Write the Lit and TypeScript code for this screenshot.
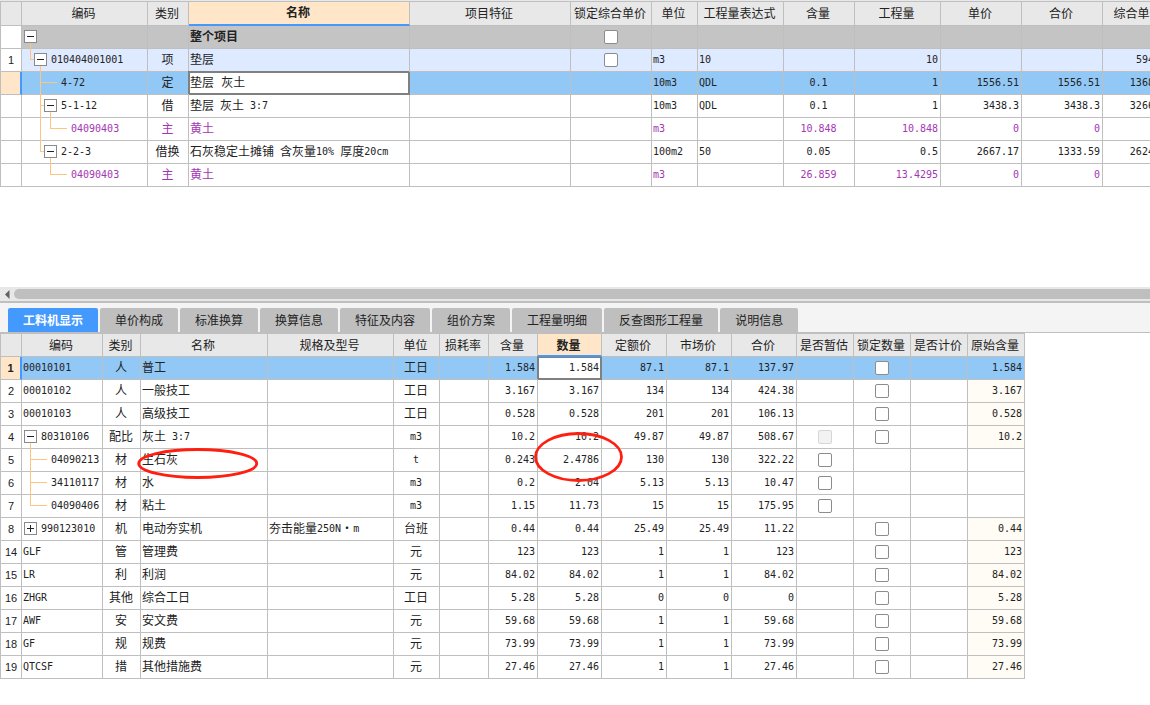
import { LitElement, html, svg, css, nothing } from "lit";
import { customElement, property } from "lit/decorators.js";
import { classMap } from "lit/directives/class-map.js";

type Align = "left" | "center" | "right";
type Check = "on" | "off" | "disabled";

interface Column {
  key: string;
  label: string;
  width: number;
  align: Align;
  current?: boolean;
  tint?: boolean;
}

interface Tree {
  level: number;
  box?: "-" | "+";
  last?: boolean;
  through?: number[];
}

interface Row {
  no?: string;
  kind?: "project" | "item" | "selected" | "material";
  edit?: string;
  tree?: Tree;
  checks?: Record<string, Check>;
  cells: Record<string, string>;
}

const col = (
  key: string,
  label: string,
  width: number,
  align: Align = "left",
  extra: Partial<Column> = {}
): Column => ({ key, label, width, align, ...extra });

const ITEM_COLUMNS: Column[] = [
  col("code", "编码", 126),
  col("type", "类别", 41, "center"),
  col("name", "名称", 221, "left", { current: true }),
  col("feature", "项目特征", 161),
  col("lock", "锁定综合单价", 81, "center"),
  col("unit", "单位", 46),
  col("expr", "工程量表达式", 86),
  col("content", "含量", 71, "center"),
  col("qty", "工程量", 86, "right"),
  col("price", "单价", 81, "right"),
  col("total", "合价", 81, "right"),
  col("full", "综合单价", 72, "right"),
];

const ITEM_ROWS: Row[] = [
  {
    kind: "project",
    tree: { level: 0, box: "-" },
    checks: { lock: "off" },
    cells: { name: "整个项目" },
  },
  {
    no: "1",
    kind: "item",
    tree: { level: 1, box: "-", last: true },
    checks: { lock: "off" },
    cells: { code: "010404001001", type: "项", name: "垫层", unit: "m3", expr: "10", qty: "10", full: "594.46" },
  },
  {
    kind: "selected",
    edit: "name",
    tree: { level: 2 },
    cells: { code: "4-72", type: "定", name: "垫层 灰土", unit: "10m3", expr: "QDL", content: "0.1", qty: "1", price: "1556.51", total: "1556.51", full: "1368.08" },
  },
  {
    tree: { level: 2, box: "-" },
    cells: { code: "5-1-12", type: "借", name: "垫层 灰土 3:7", unit: "10m3", expr: "QDL", content: "0.1", qty: "1", price: "3438.3", total: "3438.3", full: "3266.08" },
  },
  {
    kind: "material",
    tree: { level: 3, last: true, through: [1] },
    cells: { code: "04090403", type: "主", name: "黄土", unit: "m3", content: "10.848", qty: "10.848", price: "0", total: "0" },
  },
  {
    tree: { level: 2, box: "-", last: true },
    cells: { code: "2-2-3", type: "借换", name: "石灰稳定土摊铺 含灰量10% 厚度20cm", unit: "100m2", expr: "50", content: "0.05", qty: "0.5", price: "2667.17", total: "1333.59", full: "2624.08" },
  },
  {
    kind: "material",
    tree: { level: 3, last: true },
    cells: { code: "04090403", type: "主", name: "黄土", unit: "m3", content: "26.859", qty: "13.4295", price: "0", total: "0" },
  },
];

const RES_COLUMNS: Column[] = [
  col("code", "编码", 81),
  col("type", "类别", 38, "center"),
  col("name", "名称", 127),
  col("spec", "规格及型号", 126),
  col("unit", "单位", 46, "center"),
  col("loss", "损耗率", 49, "right"),
  col("content", "含量", 49, "right"),
  col("qty", "数量", 64, "right", { current: true }),
  col("quota", "定额价", 65, "right"),
  col("market", "市场价", 65, "right"),
  col("total", "合价", 65, "right"),
  col("estimate", "是否暂估", 57, "center"),
  col("lock", "锁定数量", 57, "center"),
  col("priced", "是否计价", 57, "center"),
  col("origin", "原始含量", 57, "right", { tint: true }),
];

const res = (
  no: string, code: string, type: string, name: string, unit: string,
  content: string, qty: string, quota: string, market: string, total: string,
  extra: Partial<Row> = {}
): Row => ({
  no,
  checks: { lock: "off" },
  ...extra,
  cells: { code, type, name, unit, content, qty, quota, market, total, origin: content, ...extra.cells },
});

const part = (last = false): Partial<Row> => ({
  tree: { level: 1, last },
  checks: { estimate: "off" },
  cells: { origin: "" },
});

const RES_ROWS: Row[] = [
  res("1", "00010101", "人", "普工", "工日", "1.584", "1.584", "87.1", "87.1", "137.97", { kind: "selected", edit: "qty" }),
  res("2", "00010102", "人", "一般技工", "工日", "3.167", "3.167", "134", "134", "424.38"),
  res("3", "00010103", "人", "高级技工", "工日", "0.528", "0.528", "201", "201", "106.13"),
  res("4", "80310106", "配比", "灰土 3:7", "m3", "10.2", "10.2", "49.87", "49.87", "508.67", {
    tree: { level: 0, box: "-" },
    checks: { estimate: "disabled", lock: "off" },
  }),
  res("5", "04090213", "材", "生石灰", "t", "0.243", "2.4786", "130", "130", "322.22", part()),
  res("6", "34110117", "材", "水", "m3", "0.2", "2.04", "5.13", "5.13", "10.47", part()),
  res("7", "04090406", "材", "粘土", "m3", "1.15", "11.73", "15", "15", "175.95", part(true)),
  res("8", "990123010", "机", "电动夯实机", "台班", "0.44", "0.44", "25.49", "25.49", "11.22", {
    tree: { level: 0, box: "+" },
    cells: { spec: "夯击能量250N·m" },
  }),
  res("14", "GLF", "管", "管理费", "元", "123", "123", "1", "1", "123"),
  res("15", "LR", "利", "利润", "元", "84.02", "84.02", "1", "1", "84.02"),
  res("16", "ZHGR", "其他", "综合工日", "工日", "5.28", "5.28", "0", "0", "0"),
  res("17", "AWF", "安", "安文费", "元", "59.68", "59.68", "1", "1", "59.68"),
  res("18", "GF", "规", "规费", "元", "73.99", "73.99", "1", "1", "73.99"),
  res("19", "QTCSF", "措", "其他措施费", "元", "27.46", "27.46", "1", "1", "27.46"),
];

const TABS = ["工料机显示", "单价构成", "标准换算", "换算信息", "特征及内容", "组价方案", "工程量明细", "反查图形工程量", "说明信息"];

/** Wraps half-width runs so that they take the narrow fixed-pitch face. */
const runs = (text: string) =>
  text
    .split(/([\x20-\x7e]+)/)
    .filter((s) => s !== "")
    .map((s) => (/^[\x20-\x7e]+$/.test(s) ? html`<span class="n">${s}</span>` : s));

@customElement("data-grid")
export class DataGrid extends LitElement {
  @property({ attribute: false }) columns: Column[] = [];
  @property({ attribute: false }) rows: Row[] = [];
  @property({ type: Boolean, reflect: true }) tall = false;

  static styles = css`
    :host {
      display: block;
      color: #222;
      font: 12px/20px "Noto Sans CJK SC", sans-serif;
    }
    .grid {
      table-layout: fixed;
      width: 0;
      border-collapse: separate;
      border-spacing: 0;
      border-top: 1px solid #bfbfbf;
      border-left: 1px solid #bfbfbf;
    }
    .no-col {
      width: 21px;
    }
    th,
    td {
      box-sizing: border-box;
      height: 23px;
      padding: 0 2px 2px 1px;
      border-right: 1px solid #bfbfbf;
      border-bottom: 1px solid #bfbfbf;
      white-space: nowrap;
      vertical-align: middle;
    }
    .head {
      padding: 0 2px 0 0;
      background: #e8e8e8;
      font-weight: 400;
      text-align: center;
    }
    :host([tall]) .head {
      height: 24px;
      padding-bottom: 2px;
    }
    .head.current {
      position: relative;
      z-index: 1;
      background: #ffe6c8;
      border-bottom: 2px solid #4499ff;
      font-weight: 700;
    }
    .no {
      padding: 0;
      background: #fff;
      font: 400 11px/20px "Liberation Sans", sans-serif;
      text-align: center;
    }
    .n {
      font-family: "DejaVu Sans Mono", monospace;
      font-size: 10px;
      line-height: 1;
      vertical-align: 1px;
    }
    .left {
      text-align: left;
    }
    .center {
      text-align: center;
    }
    .right {
      text-align: right;
    }
    .tint {
      background: #fffbf5;
    }
    .project {
      background: #c4c4c4;
      font-weight: 700;
    }
    .item {
      background: #deeaff;
    }
    .selected {
      background: #92c8f6;
    }
    .selected .tint {
      background: none;
    }
    .selected .no {
      background: #ffe6c8;
      border-right: 2px solid #4499ff;
      font-weight: 700;
    }
    .material {
      color: #a436b4;
    }
    .editing {
      padding: 0;
      background: #fff;
      border: solid #808080;
      border-width: 1px 2px 2px 1px;
      box-shadow: -1px -1px 0 #808080;
    }
    .field {
      display: block;
      box-sizing: border-box;
      width: 100%;
      height: 20px;
      padding: 0 1px 0 0;
      border: 0;
      outline: 0;
      background: none;
      color: inherit;
      font: 12px/20px "DejaVu Sans Mono", "Noto Sans CJK SC", monospace;
    }
    .field.right {
      font-size: 10px;
    }
    .tree,
    .ticked {
      padding: 0;
    }
    .branch {
      display: flex;
      align-items: center;
      height: 22px;
    }
    .label {
      padding-bottom: 2px;
    }
    .guides {
      flex: none;
      display: block;
      overflow: visible;
    }
    .toggle {
      flex: none;
      position: relative;
      display: block;
      box-sizing: border-box;
      width: 13px;
      height: 13px;
      margin: 0 4px 1px 0;
      padding: 0;
      border: 1px solid #8a8a8a;
      background: #fff;
      color: #222;
    }
    .sign {
      display: block;
    }
    .check {
      appearance: none;
      display: block;
      box-sizing: border-box;
      width: 14px;
      height: 14px;
      margin: 0 auto;
      border: 1px solid #8c8c8c;
      border-radius: 2px;
      background: #fff;
    }
    .check:disabled {
      border-color: #d6d6d6;
      background: #f2f2f2;
    }
  `;

  private treeCell(tree: Tree, code: string) {
    const { level, box, last, through = [] } = tree;
    const center = (l: number) => 8.5 + 10 * l;
    const width = box ? 2 + 10 * level : 19 + 10 * level;
    const reach = box ? width : width - 4;
    const line = (x1: number, y1: number, x2: number, y2: number) =>
      svg`<line x1=${x1} y1=${y1} x2=${x2} y2=${y2} stroke="#fdc580"></line>`;
    return html`<div class="branch">
      <svg class="guides" width=${width} height="22" aria-hidden="true">
        ${through.map((l) => line(center(l), 0, center(l), 23))}
        ${level > 0
          ? [
              line(center(level - 1), 0, center(level - 1), last ? 11 : 23),
              line(center(level - 1), 10.5, reach, 10.5),
            ]
          : nothing}
        ${box === "-" ? line(center(level), 17, center(level), 23) : nothing}
      </svg>
      ${box
        ? html`<button class="toggle" type="button" aria-label=${box === "-" ? "折叠" : "展开"}>
            <svg class="sign" width="11" height="11" viewBox="0 0 11 11">
              <path d=${box === "-" ? "M2 5.5H9" : "M2 5.5H9M5.5 2V9"} stroke="currentColor" fill="none"></path>
            </svg>
          </button>`
        : nothing}
      <span class="label">${runs(code)}</span>
    </div>`;
  }

  private cell(row: Row, c: Column) {
    const text = row.cells[c.key] ?? "";
    if (c.key === "code" && row.tree) {
      return html`<td class="tree">${this.treeCell(row.tree, text)}</td>`;
    }
    if (row.edit === c.key) {
      return html`<td class="editing">
        <input class=${"field " + c.align} type="text" aria-label=${c.label} .value=${text} />
      </td>`;
    }
    const check = row.checks?.[c.key];
    if (check) {
      return html`<td class="ticked">
        <input class="check" type="checkbox" aria-label=${c.label} ?checked=${check === "on"} ?disabled=${check === "disabled"} />
      </td>`;
    }
    const classes = { [c.align]: true, tint: !!c.tint && text !== "" };
    return html`<td class=${classMap(classes)}>${runs(text)}</td>`;
  }

  render() {
    return html`<table class="grid">
      <colgroup>
        <col class="no-col" />
        ${this.columns.map((c) => html`<col style="width:${c.width}px" />`)}
      </colgroup>
      <thead>
        <tr>
          <th class="head"></th>
          ${this.columns.map(
            (c) => html`<th scope="col" class=${classMap({ head: true, current: !!c.current })}>${c.label}</th>`
          )}
        </tr>
      </thead>
      <tbody>
        ${this.rows.map(
          (row) => html`<tr class=${row.kind ?? ""}>
            <th class="no" scope="row">${row.no ?? ""}</th>
            ${this.columns.map((c) => this.cell(row, c))}
          </tr>`
        )}
      </tbody>
    </table>`;
  }
}

@customElement("app-root")
export class AppRoot extends LitElement {
  static styles = css`
    :host {
      display: block;
      min-height: 100vh;
      overflow: hidden;
      background: #fff;
      color: #222;
      font: 12px/20px "Noto Sans CJK SC", sans-serif;
    }
    .items {
      padding-bottom: 100px;
      border-top: 1px solid #e8e8e8;
      overflow: hidden;
    }
    .scrollbar {
      display: flex;
      align-items: center;
      height: 14px;
      background: #e8e8e8;
      border-bottom: 2px solid #bfbfbf;
    }
    .arrow {
      display: flex;
      align-items: center;
      justify-content: center;
      width: 14px;
      height: 14px;
      padding: 0;
      border: 0;
      background: none;
    }
    .thumb {
      flex: 1;
      height: 10px;
      border-radius: 5px 0 0 5px;
      background: #bfbfbf;
    }
    .tabs {
      display: flex;
      gap: 2px;
      padding: 5px 8px 0;
      background: #f4f4f4;
      border-bottom: 1px solid #bfbfbf;
    }
    .tab {
      height: 24px;
      padding: 0 15px;
      border: 0;
      border-radius: 2px 2px 0 0;
      background: #bfbfbf;
      color: #222;
      font: inherit;
      white-space: nowrap;
    }
    .tab.active {
      background: #4499ff;
      color: #fff;
      font-weight: 700;
    }
    .resources {
      position: relative;
    }
    .marks {
      position: absolute;
      top: 0;
      left: 0;
      z-index: 2;
      pointer-events: none;
    }
  `;

  render() {
    return html`
      <section class="items">
        <data-grid tall .columns=${ITEM_COLUMNS} .rows=${ITEM_ROWS}></data-grid>
      </section>
      <div class="scrollbar">
        <button class="arrow" type="button" aria-label="向左滚动">
          <svg width="6" height="9" viewBox="0 0 6 9"><path d="M5.5 0V9L1 4.5Z" fill="#606068"></path></svg>
        </button>
        <div class="thumb"></div>
      </div>
      <div class="tabs" role="tablist">
        ${TABS.map(
          (t, i) => html`<button type="button" role="tab" aria-selected=${i === 0 ? "true" : "false"}
            class=${classMap({ tab: true, active: i === 0 })}>${t}</button>`
        )}
      </div>
      <section class="resources">
        <data-grid .columns=${RES_COLUMNS} .rows=${RES_ROWS}></data-grid>
        <svg class="marks" width="640" height="160" fill="none" stroke="#ff1e10" stroke-width="2.8" aria-hidden="true">
          <ellipse cx="197.7" cy="130.5" rx="59" ry="14"></ellipse>
          <ellipse cx="578.5" cy="124" rx="43" ry="23.5"></ellipse>
        </svg>
      </section>
    `;
  }
}
